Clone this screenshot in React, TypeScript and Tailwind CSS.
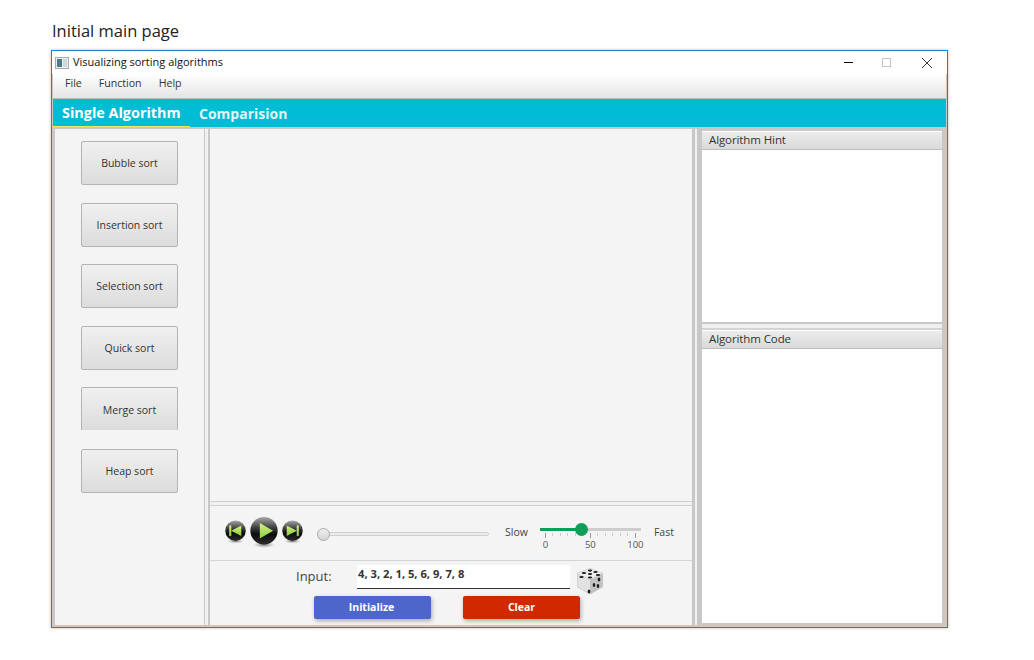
const ui = { fontFamily: '"Open Sans", "Noto Sans", sans-serif' };

function Ball({ size, kind, id }: { size: number; kind: "prev" | "play" | "next"; id: string }) {
  return (
    <svg width={size} height={size + 5} viewBox="0 0 40 45" className="shrink-0">
      <defs>
        <radialGradient id={id + "s"} cx="50%" cy="50%" r="50%">
          <stop offset="0%" stopColor="#555" stopOpacity="0.8" />
          <stop offset="100%" stopColor="#999" stopOpacity="0" />
        </radialGradient>
        <linearGradient id={id + "b"} x1="0" y1="0" x2="0" y2="1">
          <stop offset="0%" stopColor="#a8a8a8" />
          <stop offset="38%" stopColor="#404040" />
          <stop offset="62%" stopColor="#0c0c0c" />
          <stop offset="100%" stopColor="#2c2c2c" />
        </linearGradient>
        <linearGradient id={id + "g"} x1="0" y1="0" x2="0" y2="1">
          <stop offset="0%" stopColor="#d2ee8a" />
          <stop offset="100%" stopColor="#8ccf35" />
        </linearGradient>
      </defs>
      <ellipse cx="20" cy="40" rx="16" ry="4.5" fill={`url(#${id}s)`} />
      <circle cx="20" cy="20" r="19.5" fill={`url(#${id}b)`} />
      {kind === "play" && <path d="M14 9 L33 20 L14 31 Z" fill={`url(#${id}g)`} />}
      {kind === "prev" && (
        <g fill={`url(#${id}g)`}>
          <rect x="8" y="10" width="4" height="20" />
          <path d="M31 10 V30 L12 20 Z" />
        </g>
      )}
      {kind === "next" && (
        <g fill={`url(#${id}g)`}>
          <rect x="28" y="10" width="4" height="20" />
          <path d="M9 10 V30 L28 20 Z" />
        </g>
      )}
    </svg>
  );
}

function Dice() {
  return (
    <svg width="28" height="28" viewBox="0 0 28 28" className="shrink-0 ml-[6px] mt-[2px]">
      <path d="M14 1 L27 6 L27 20 L14 27.5 L1 20 L1 6 Z" fill="#c4c4c4" />
      <path d="M14 1.5 L26.5 6.5 L14 12.5 L1.5 6.5 Z" fill="#eeeeee" />
      <path d="M1.5 7 L14 13 L14 27 L1.5 19.5 Z" fill="#e2e2e2" />
      <path d="M26.5 7 L14 13 L14 27 L26.5 19.5 Z" fill="#c2c2c2" />
      <g fill="#1d1d1d">
        <ellipse cx="8" cy="6" rx="2.2" ry="1.1" />
        <ellipse cx="14" cy="3.6" rx="2.2" ry="1.1" />
        <ellipse cx="14" cy="7" rx="2.2" ry="1.1" />
        <ellipse cx="19.5" cy="5" rx="2.2" ry="1.1" />
        <ellipse cx="22" cy="8" rx="2.2" ry="1.1" />
        <ellipse cx="14" cy="10.5" rx="2.2" ry="1.1" />
        <ellipse cx="5.5" cy="10" rx="2.2" ry="1.1" />
        <ellipse cx="23" cy="12.5" rx="1.3" ry="1.9" />
        <ellipse cx="18" cy="18" rx="1.3" ry="1.9" />
        <ellipse cx="22" cy="19" rx="1.3" ry="1.9" />
        <ellipse cx="13" cy="24.5" rx="1.3" ry="1.9" />
      </g>
    </svg>
  );
}

const algos = ["Bubble sort", "Insertion sort", "Selection sort", "Quick sort", "Merge sort", "Heap sort"];

function PanelHead({ label }: { label: string }) {
  return (
    <div className="h-[19px] shrink-0 flex items-center pl-[7px] pb-[2px] text-[11.5px] tracking-[-0.1px] text-[#333] border-b border-[#bdbdbd] border-t border-t-white bg-gradient-to-b from-[#ececec] to-[#dadada]">
      {label}
    </div>
  );
}

export default function App() {
  const ticks = [0, 1, 2, 3, 4, 5, 6, 7, 8, 9, 10, 11, 12];
  return (
    <div className="w-[1034px] h-[660px] bg-white overflow-hidden" style={ui}>
      <div className="h-[50px] pl-[52px] pt-[20px] text-[16.5px] leading-[22px] text-[#222]">Initial main page</div>
      <div className="ml-[51px] w-[897px] h-[578px] border border-[#1585d8] flex flex-col shadow-[0_0_3px_rgba(0,0,0,0.25)] bg-[#c8c8c8]">
        {/* title bar */}
        <div className="h-[23px] shrink-0 bg-white flex items-center text-[11px] text-[#111]">
          <svg width="14" height="12" viewBox="0 0 14 12" className="ml-[3px] mr-[4px]">
            <rect x="0.5" y="0.5" width="13" height="11" fill="#eee" stroke="#aaa" />
            <rect x="2" y="2" width="5" height="8" fill="#4a7a8c" />
            <rect x="8" y="2" width="4" height="8" fill="#cfd8dc" />
          </svg>
          <span>Visualizing sorting algorithms</span>
          <div className="ml-auto flex items-center mr-[15px]">
            <div className="w-[9px] h-px bg-black mr-[29px]" />
            <div className="w-[9px] h-[9px] border border-[#c4c4c4] mr-[31px]" />
            <svg width="10" height="10" viewBox="0 0 10 10" stroke="#222" strokeWidth="0.9">
              <path d="M0 0 L10 10 M10 0 L0 10" />
            </svg>
          </div>
        </div>
        {/* menu */}
        <div className="h-[25px] shrink-0 mx-px bg-gradient-to-b from-white to-[#e4e4e4] border-b border-[#bdbdbd] flex items-center pl-[12px] gap-[17px] text-[10.6px] text-[#333] pb-[4px]">
          <span>File</span>
          <span>Function</span>
          <span>Help</span>
        </div>
        {/* tabs */}
        <div className="h-[28px] shrink-0 ml-px mr-px bg-[#00bcd4] flex items-stretch font-bold">
          <div className="w-[137px] pl-[9px] flex items-center text-[14.4px] text-white border-b border-[#f2e85a]">Single Algorithm</div>
          <div className="pl-[9px] flex items-center text-[14px] text-[#e0f6f9]">Comparision</div>
        </div>
        {/* body */}
        <div className="flex-1 min-h-0 flex pt-[2px] pb-[2px] pl-[3px] pr-[4px]">
          {/* left */}
          <div className="w-[149px] shrink-0 bg-[#f4f4f4] flex flex-col items-center pt-[12px] gap-[17.6px]">
            {algos.map((a) => (
              <div
                key={a}
                className={
                  a === "Merge sort"
                    ? "w-[97px] h-[44px] shrink-0 pt-[2px] rounded-[2px] border border-[#b4b4b4] border-b-[#f4f4f4] bg-gradient-to-b from-[#f0f0f0] to-[#dcdcdc] flex items-center justify-center text-[10.5px] text-[#333]"
                    : "w-[97px] h-[44px] shrink-0 pt-[2px] rounded-[2px] border border-[#b4b4b4] bg-gradient-to-b from-[#f0f0f0] to-[#dcdcdc] flex items-center justify-center text-[10.5px] text-[#333]"
                }
              >
                {a}
              </div>
            ))}
          </div>
          <div className="w-[6px] shrink-0 border-l border-[#c8c8c8] border-r-2 border-r-[#c8c8c8] bg-[#f1f1f1]" />
          {/* center */}
          <div className="w-[482px] shrink-0 bg-[#f4f4f4] flex flex-col">
            <div className="flex-1 min-h-0" />
            <div className="h-[5px] shrink-0 border-t border-b border-[#d0d0d0] bg-[#f1f1f1]" />
            {/* player */}
            <div className="h-[55px] shrink-0 border-b border-[#d4d4d4] flex items-center pl-[15px]">
              <div className="flex items-center gap-[4px] mb-[2px]">
                <Ball size={21} kind="prev" id="a" />
                <Ball size={28} kind="play" id="b" />
                <Ball size={21} kind="next" id="c" />
              </div>
              <div className="ml-[14px] w-[172px] h-[4px] rounded-full bg-[#ececec] border border-[#cfcfcf] relative mt-[2px]">
                <div className="absolute left-[-1px] top-[-5px] w-[13px] h-[13px] rounded-full border border-[#aaa] bg-gradient-to-b from-[#eee] to-[#d4d4d4]" />
              </div>
              <span className="ml-[16px] text-[10.5px] text-[#444] -mt-[1px]">Slow</span>
              <div className="ml-[12px] w-[101px] flex flex-col mt-[11px]">
                <div className="h-[3px] bg-[#cdcdcd] relative flex">
                  <div className="w-[41px] h-[3px] bg-[#0f9d58]" />
                  <div className="absolute left-[35px] top-[-5px] w-[13px] h-[13px] rounded-full bg-[#0f9d58]" />
                </div>
                <div className="flex justify-between items-start mt-[2px] px-[5px]">
                  {ticks.map((i) => (
                    <div key={i} className={i % 6 === 0 ? "w-px h-[5px] bg-[#999]" : "w-px h-[3px] bg-[#ccc]"} />
                  ))}
                </div>
                <div className="flex justify-between text-[9.5px] leading-[9px] text-[#555] mt-[2px] px-[5px]">
                  <div className="w-px flex justify-center">0</div>
                  <div className="w-px flex justify-center">50</div>
                  <div className="w-px flex justify-center">100</div>
                </div>
              </div>
              <span className="ml-[13px] text-[10.5px] text-[#444] -mt-[1px]">Fast</span>
            </div>
            {/* input */}
            <div className="h-[64px] shrink-0 flex flex-col">
              <div className="flex items-start pt-[4px] ml-[86px]">
                <span className="w-[61px] text-[13px] leading-[22px] text-[#444]">Input:</span>
                <div className="w-[213px] h-[24px] bg-white border-b border-[#333] rounded-tr-[2px] pl-px pb-[5px] flex items-center text-[11.2px] font-bold text-[#333]">
                  4, 3, 2, 1, 5, 6, 9, 7, 8
                </div>
                <Dice />
              </div>
              <div className="flex mt-[1px] ml-[104px] gap-[32px]">
                <div className="w-[117px] h-[23px] pt-[1px] pr-[2px] rounded-[2px] bg-[#4e66cc] shadow-[1px_2px_4px_rgba(0,0,0,0.3)] flex items-center justify-center text-[10.5px] font-bold text-white">
                  Initialize
                </div>
                <div className="w-[117px] h-[23px] pt-[1px] rounded-[2px] bg-[#d12800] shadow-[1px_2px_4px_rgba(0,0,0,0.3)] flex items-center justify-center text-[10.5px] font-bold text-white">
                  Clear
                </div>
              </div>
            </div>
          </div>
          <div className="w-[10px] shrink-0 border-l-[3px] border-r-[5px] border-[#c8c8c8] bg-[#f1f1f1]" />
          {/* right */}
          <div className="w-[240px] shrink-0 flex flex-col pb-[2px]">
            <div className="h-[193px] shrink-0 flex flex-col pt-[2px]">
              <PanelHead label="Algorithm Hint" />
              <div className="flex-1 bg-white" />
            </div>
            <div className="h-[8px] shrink-0 border-t-2 border-[#c8c8c8] bg-[#efefef] border-b-2 border-b-[#d4d4d4]" />
            <div className="flex-1 min-h-0 flex flex-col">
              <PanelHead label="Algorithm Code" />
              <div className="flex-1 bg-white" />
            </div>
          </div>
        </div>
      </div>
    </div>
  );
}
